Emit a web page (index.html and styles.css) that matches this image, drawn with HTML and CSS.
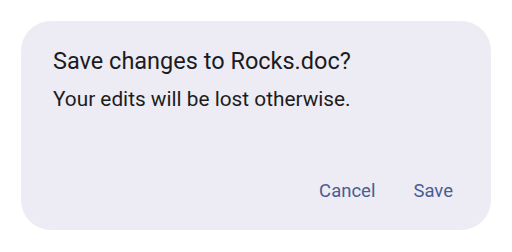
FILE: index.html
```html
<!DOCTYPE html>
<html>
<head>
  <meta charset="UTF-8">
  <meta name="viewport" content="width=device-width, initial-scale=1.0">
  <title>Save dialog</title>
  <link rel="stylesheet" href="styles.css">
</head>
<body>
  <!-- Confirm dialog -->
  <div class="dialog">
    <h2 class="dialog-title">Save changes to Rocks.doc?</h2>
    <p class="dialog-text">Your edits will be lost otherwise.</p>

    <div class="dialog-actions">
      <button>Cancel</button>
      <button>Save</button>
    </div>
  </div>
</body>
</html>
```

FILE: styles.css
```css
/* Base styles */
* {
  box-sizing: border-box;
  font-family: Roboto, "Noto Sans", sans-serif;
}

body {
  margin: 0;
  padding: 21px;
  background-color: #fff;
  color: #1c1b1f;
}

/* Dialog card */
.dialog {
  width: 470px;
  height: 209px;
  background-color: #edecf4;
  border-radius: 30px;
  padding: 24px 32px 0 32px;
  display: flex;
  flex-direction: column;
}

.dialog-title {
  margin: 0;
  font-size: 23.5px;
  font-weight: 400;
  line-height: 32px;
}

.dialog-text {
  margin: 8px 0 0 0;
  font-size: 20.8px;
  line-height: 28px;
  color: #1d1c22;
}

/* Actions */
.dialog-actions {
  margin-top: auto;
  margin-bottom: 27px;
  margin-right: 6px;
  display: flex;
  justify-content: flex-end;
  gap: 38px;
}

button {
  background: none;
  border: none;
  padding: 0;
  font-size: 18.5px;
  font-weight: 400;
  color: #4a5c92;
  line-height: 24px;
  cursor: pointer;
}
```
